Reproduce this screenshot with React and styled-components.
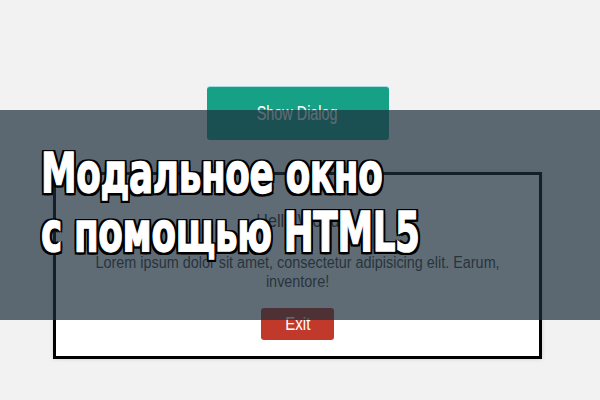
import React from "react";
import styled, { createGlobalStyle } from "styled-components";

const Global = createGlobalStyle`
  html, body { margin: 0; padding: 0; }
  body {
    background: #f2f2f2;
    font-family: "Liberation Sans", Arial, sans-serif;
  }
`;

const Page = styled.div`
  position: relative;
  width: 600px;
  height: 400px;
  overflow: hidden;
  background: #f2f2f2;
`;

const Stage = styled.div`
  display: flex;
  flex-direction: column;
  align-items: center;
  padding: 87px 5px 0 0;
`;

const Squeeze = styled.span`
  display: inline-block;
  white-space: nowrap;
  transform: scaleX(${(p) => p.$x || 0.78});
  transform-origin: center;
`;

const ShowButton = styled.button`
  width: 182px;
  height: 53px;
  border: none;
  border-radius: 3px;
  background: #16a085;
  box-shadow: 0 -1px 0 #a9dbe6;
  color: #ffffff;
  font-family: "Liberation Sans", Arial, sans-serif;
  font-size: 20px;
  padding: 0;
  display: flex;
  align-items: center;
  justify-content: center;
`;

const Dialog = styled.div`
  box-sizing: border-box;
  width: 489px;
  margin-top: 32px;
  border: 3px solid #000;
  background: #fff;
  box-shadow: 0 0 4px rgba(0, 0, 0, 0.15);
  padding: 35px 20px 16px;
  display: flex;
  flex-direction: column;
  align-items: center;
  text-align: center;
`;

const Heading = styled.h2`
  margin: 0;
  font-size: 19px;
  line-height: 22px;
  font-weight: normal;
  color: #333;
`;

const Body = styled.p`
  margin: 21px 0 0;
  font-size: 16px;
  line-height: 19px;
  color: #444;
`;

const ExitButton = styled.button`
  margin-top: 17px;
  width: 73px;
  height: 32px;
  border: none;
  border-radius: 3px;
  background: #c0392b;
  color: #fff;
  font-family: "Liberation Sans", Arial, sans-serif;
  font-size: 19px;
  padding: 0;
  display: flex;
  align-items: center;
  justify-content: center;
`;

const Banner = styled.div`
  position: absolute;
  left: 0;
  right: 0;
  top: 110px;
  height: 210px;
  background: rgba(28, 45, 58, 0.7);
  box-sizing: border-box;
  padding: 34px 0 0 41px;
`;

const TitleLine = styled.div`
  font-family: "DejaVu Sans", sans-serif;
  font-weight: bold;
  font-size: 55px;
  line-height: 59px;
  color: #fff;
  white-space: nowrap;
  transform: scaleX(0.65);
  transform-origin: left center;
  letter-spacing: -0.5px;
  -webkit-text-stroke: 1.5px #fff;
  text-shadow:
    3.5px 0 0 #000, -3.5px 0 0 #000, 0 2.5px 0 #000, 0 -2.5px 0 #000,
    3.5px 2.5px 0 #000, -3.5px 2.5px 0 #000, 3.5px -2.5px 0 #000, -3.5px -2.5px 0 #000,
    2px 1.5px 0 #000, -2px 1.5px 0 #000;
`;

export default function App() {
  return (
    <Page>
      <Global />
      <Stage>
        <ShowButton>
          <Squeeze $x={0.72}>Show Dialog</Squeeze>
        </ShowButton>
        <Dialog>
          <Heading>
            <Squeeze $x={0.85}>Hello World</Squeeze>
          </Heading>
          <Body>
            <Squeeze $x={0.9}>
              Lorem ipsum dolor sit amet, consectetur adipisicing elit. Earum,
              <br />
              inventore!
            </Squeeze>
          </Body>
          <ExitButton>
            <Squeeze $x={0.79}>Exit</Squeeze>
          </ExitButton>
        </Dialog>
      </Stage>
      <Banner>
        <TitleLine>Модальное окно</TitleLine>
        <TitleLine>с помощью HTML5</TitleLine>
      </Banner>
    </Page>
  );
}
